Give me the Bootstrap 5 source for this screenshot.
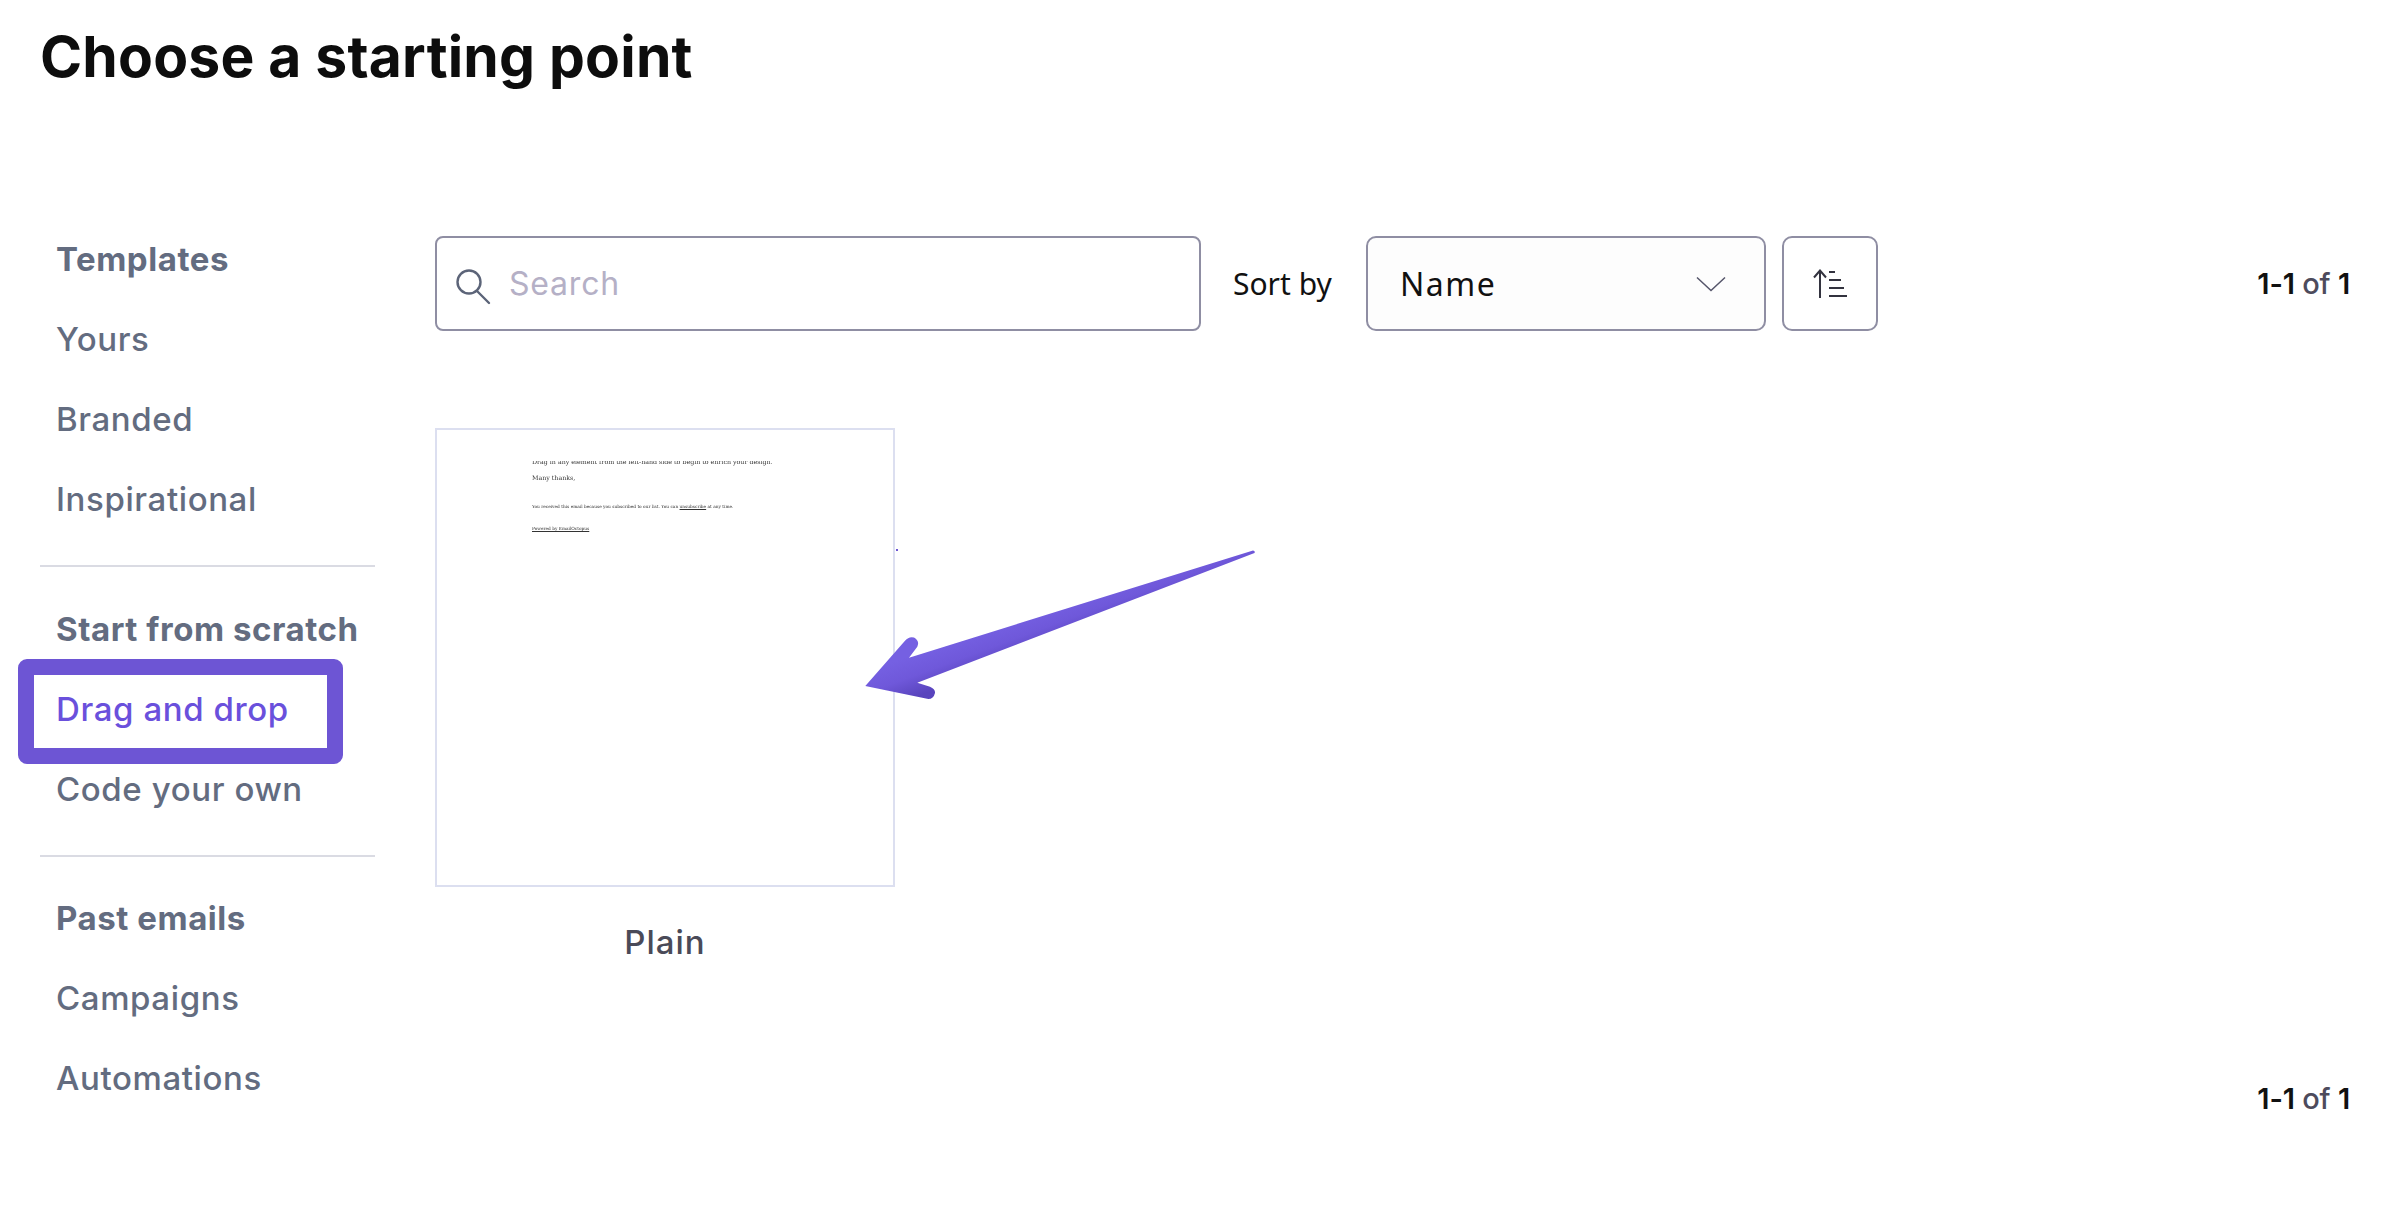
<!DOCTYPE html>
<html lang="en">
<head>
<meta charset="utf-8">
<title>Choose a starting point</title>
<link href="https://cdn.jsdelivr.net/npm/bootstrap@5.3.0/dist/css/bootstrap.min.css" rel="stylesheet">
<style>
html,body{height:100%;background:#fff;overflow:hidden}
body{font-family:"Inter","Liberation Sans",sans-serif;position:relative}
.page-title{font-family:"Inter",sans-serif;font-weight:700;font-size:57px;line-height:68px;color:#0d0d0d;margin:0;padding:23px 0 0 40px;height:220px;letter-spacing:.2px}
.side-col{width:435px;flex:none;padding-left:40px}
.side-head,.side-col .nav-link{height:80px;display:flex;align-items:center;padding:0 0 0 16px;font-size:33px;font-weight:500;color:#636c80;letter-spacing:.6px}
.side-head{font-weight:700;letter-spacing:.55px}
.side-col .nav-link.is-current{color:#6a50dc;position:relative}
.hilite{position:absolute;left:-22px;top:-11px;width:325px;height:105px;border:16px solid #6d55d4;border-radius:9px;pointer-events:none}
.side-rule{width:335px;margin:25px 0 23px;border:0;border-top:2px solid #dadbe3;opacity:1}
.side-rule.rule-tight{margin-bottom:22px}
.main-col{flex:1;padding-top:16px;padding-right:50px;min-width:0}
.tool-row{height:95px}
.search-wrap{width:766px;position:relative}
.search-wrap .form-control{height:95px;border:2px solid #8f8ea3;border-radius:8px;padding:0 0 0 72px;font-family:"Inter",sans-serif;font-size:32px;color:#333}
.search-wrap .form-control::placeholder{color:#b5b0c6;opacity:1;letter-spacing:.8px}
.search-ico{position:absolute;left:20px;top:25px;width:40px;height:46px}
.sort-label{font-family:"Noto Sans",sans-serif;font-size:30px;color:#111;margin:0 32px 0 32px;width:101px;white-space:nowrap}
.sort-select{width:400px;height:95px;border:2px solid #8f8ea3;border-radius:10px;background:#fdfdfd;font-family:"Noto Sans",sans-serif;font-size:32px;color:#111;padding:0 38px 0 32px;letter-spacing:1.5px}
.sort-select:hover,.sort-btn:hover{border-color:#8f8ea3;background:#fdfdfd;color:#111}
.sort-btn{width:96px;height:95px;border:2px solid #8f8ea3;border-radius:10px;margin-left:16px;padding:0;background:#fff}
.pager-txt{font-size:29px;font-weight:500;color:#4d4b5c;letter-spacing:-.2px;line-height:1}
.pager-txt b{font-weight:600;color:#111}
.thumb-col{width:460px;margin-top:97px}
.thumb-box{width:460px;height:459px;border:2px solid #dcdff0;overflow:hidden;padding-top:31px;background:#fff}
.thumb-clip{height:90px;overflow:hidden;padding-left:95px;font-family:"DejaVu Serif",serif;color:#333;filter:blur(.45px)}
.mini-a{font-size:6.3px;line-height:11px;margin:-5px 0 5px;white-space:nowrap}
.mini-b{font-size:6.3px;line-height:11px;margin:0 0 20px}
.mini-c{font-size:4.3px;line-height:8px;margin:0 0 14px;white-space:nowrap}
.mini-c u{text-underline-offset:1px}
.thumb-name{font-size:33px;font-weight:500;color:#4a4a58;text-align:center;margin-top:35px;line-height:40px;letter-spacing:1px}
.bottom-row{margin-top:122px}
.arrow-layer{position:absolute;left:0;top:0;pointer-events:none}
</style>
</head>
<body>
<h1 class="page-title">Choose a starting point</h1>
<div class="d-flex">
  <nav class="side-col">
    <div class="side-head">Templates</div>
    <div class="nav flex-column">
      <a class="nav-link" href="#">Yours</a>
      <a class="nav-link" href="#">Branded</a>
      <a class="nav-link" href="#">Inspirational</a>
    </div>
    <hr class="side-rule">
    <div class="side-head">Start from scratch</div>
    <div class="nav flex-column">
      <a class="nav-link is-current" href="#">Drag and drop<span class="hilite"></span></a>
      <a class="nav-link" href="#">Code your own</a>
    </div>
    <hr class="side-rule rule-tight">
    <div class="side-head">Past emails</div>
    <div class="nav flex-column">
      <a class="nav-link" href="#">Campaigns</a>
      <a class="nav-link" href="#">Automations</a>
    </div>
  </nav>
  <main class="main-col">
    <div class="d-flex align-items-center tool-row">
      <div class="search-wrap">
        <svg class="search-ico" viewBox="0 0 40 46" fill="none" stroke="#5c6478" stroke-width="2.4"><circle cx="14" cy="21" r="11.5"/><path d="M22 30l12 12" stroke-linecap="round"/></svg>
        <input class="form-control" type="text" placeholder="Search" aria-label="Search">
      </div>
      <span class="sort-label">Sort by</span>
      <button class="btn sort-select d-flex align-items-center justify-content-between" type="button">
        <span>Name</span>
        <svg width="30" height="16" viewBox="0 0 30 16" fill="none" stroke="#55556a" stroke-width="1.5"><path d="M1 1.5l14 13 14-13"/></svg>
      </button>
      <button class="btn sort-btn d-flex align-items-center justify-content-center" type="button" aria-label="Sort order">
        <svg width="34" height="30" viewBox="0 0 34 30" fill="none" stroke="#33333f" stroke-width="2"><path d="M7 29V2M1 8.5l6-7 6 7"/><path d="M16 3h6M16 11h12M16 19h15M16 27h18"/></svg>
      </button>
      <div class="pager-txt ms-auto"><b>1-1</b> of <b>1</b></div>
    </div>
    <div class="thumb-col">
      <div class="thumb-box">
        <div class="thumb-clip">
          <p class="mini-a">Drag in any element from the left-hand side to begin to enrich your design.</p>
          <p class="mini-b">Many thanks,</p>
          <p class="mini-c">You received this email because you subscribed to our list. You can <u>unsubscribe</u> at any time.</p>
          <p class="mini-c"><u>Powered by EmailOctopus</u></p>
        </div>
      </div>
      <div class="thumb-name">Plain</div>
    </div>
    <div class="d-flex justify-content-end bottom-row">
      <div class="pager-txt"><b>1-1</b> of <b>1</b></div>
    </div>
  </main>
</div>
<svg class="arrow-layer" width="2400" height="1228" viewBox="0 0 2400 1228">
  <defs>
    <linearGradient id="arrowFill" gradientUnits="userSpaceOnUse" x1="923" y1="651" x2="937" y2="689">
      <stop offset="0" stop-color="#7560e2"/>
      <stop offset=".5" stop-color="#6f58da"/>
      <stop offset="1" stop-color="#5944bd"/>
    </linearGradient>
  </defs>
  <rect x="896" y="549" width="2" height="2" fill="#6d55d4"/>
  <path fill="url(#arrowFill)" d="M1253 550.5Q1255.5 551 1254.5 553L917.3 682.7L930 686.7Q935.5 689 935 693Q933.5 699 928.3 699L865.3 686L905 640.7Q909 636 914 637.5Q920 641 917.3 646.7L909 657.7Z"/>
</svg>
<script src="https://cdn.jsdelivr.net/npm/bootstrap@5.3.0/dist/js/bootstrap.bundle.min.js"></script>
</body>
</html>
